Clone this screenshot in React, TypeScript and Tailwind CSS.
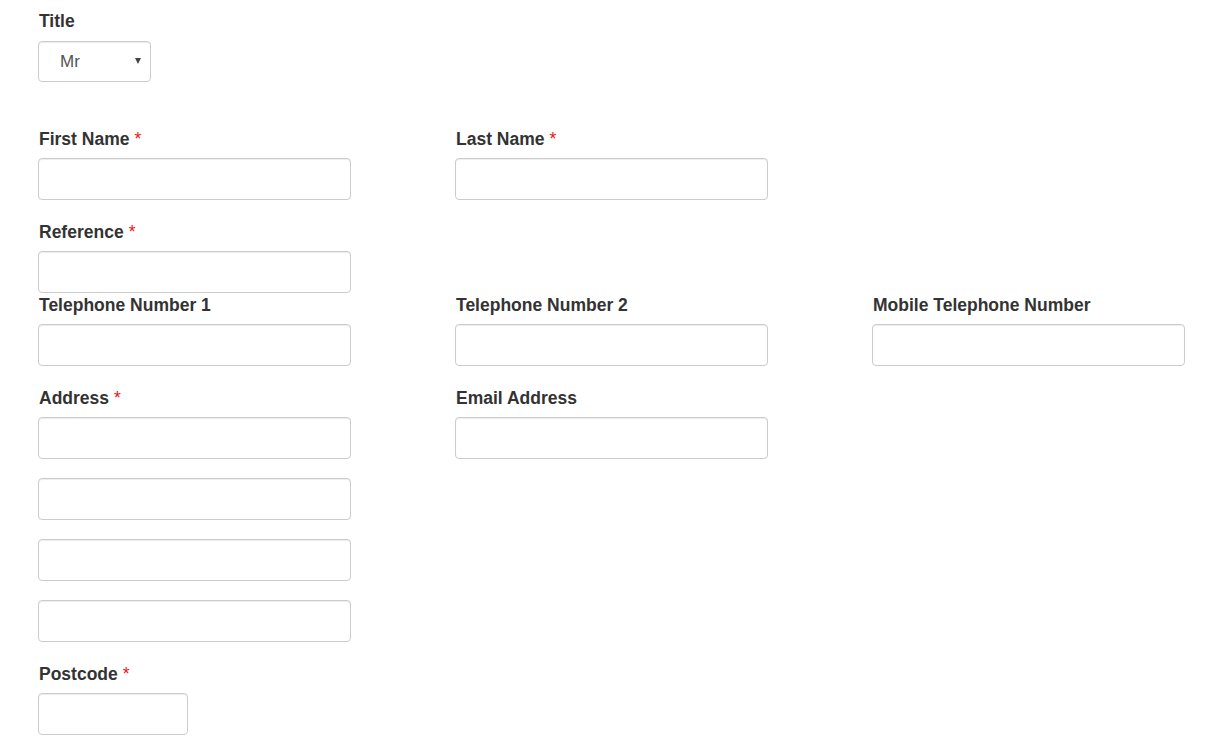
import React from "react";

type FieldProps = {
  label: string;
  required?: boolean;
  width?: string;
};

const inputCls =
  "block h-[42px] rounded-[4px] border border-[#cccccc] bg-white px-3 text-[17px] text-[#555555] shadow-[inset_0_1px_1px_rgba(0,0,0,0.075)] outline-none";

const Label = ({ label, required }: { label: string; required?: boolean }) => (
  <label className="mb-[10px] block h-[20px] pl-[1px] text-[17.5px] font-bold leading-[22px] text-[#333333]">
    {label}
    {required && <span className="ml-[5px] font-normal text-[#ee1111]">*</span>}
  </label>
);

const Field = ({ label, required, width = "w-[313px]" }: FieldProps) => (
  <div className="w-[313px]">
    <Label label={label} required={required} />
    <input type="text" className={`${inputCls} ${width}`} />
  </div>
);

const App = () => {
  return (
    <div
      className="min-h-[748px] bg-white pl-[38px] pt-[10px]"
      style={{ fontFamily: '"Liberation Sans", Arial, sans-serif' }}
    >
      {/* Title */}
      <div className="mb-[46px]">
        <label className="mb-[11px] block h-[20px] pl-[1px] text-[17.5px] font-bold leading-[22px] text-[#333333]">
          Title
        </label>
        <div className="relative w-[113px]">
          <select
            defaultValue="Mr"
            className="block h-[41px] w-[113px] appearance-none rounded-[4px] border border-[#cccccc] bg-white pl-[21px] text-[17px] text-[#555555] shadow-[inset_0_1px_1px_rgba(0,0,0,0.075)] outline-none"
          >
            <option>Mr</option>
            <option>Mrs</option>
            <option>Miss</option>
            <option>Ms</option>
            <option>Dr</option>
          </select>
          <span className="pointer-events-none absolute right-[10px] top-[17px] h-0 w-0 border-l-[3.5px] border-r-[3.5px] border-t-[6px] border-l-transparent border-r-transparent border-t-[#444444]" />
        </div>
      </div>

      {/* Names */}
      <div className="mb-[21px] flex gap-[104px]">
        <Field label="First Name" required />
        <Field label="Last Name" required />
      </div>

      {/* Reference */}
      <div className="mb-[1px] flex gap-[104px]">
        <Field label="Reference" required />
      </div>

      {/* Telephones */}
      <div className="mb-[21px] flex gap-[104px]">
        <Field label="Telephone Number 1" />
        <Field label="Telephone Number 2" />
        <Field label="Mobile Telephone Number" />
      </div>

      {/* Address + email */}
      <div className="mb-[21px] flex gap-[104px]">
        <div className="w-[313px]">
          <Label label="Address" required />
          <div className="flex flex-col gap-[19px]">
            <input type="text" className={`${inputCls} w-[313px]`} />
            <input type="text" className={`${inputCls} w-[313px]`} />
            <input type="text" className={`${inputCls} w-[313px]`} />
            <input type="text" className={`${inputCls} w-[313px]`} />
          </div>
        </div>
        <Field label="Email Address" />
      </div>

      {/* Postcode */}
      <Field label="Postcode" required width="w-[150px]" />
    </div>
  );
};

export default App;
